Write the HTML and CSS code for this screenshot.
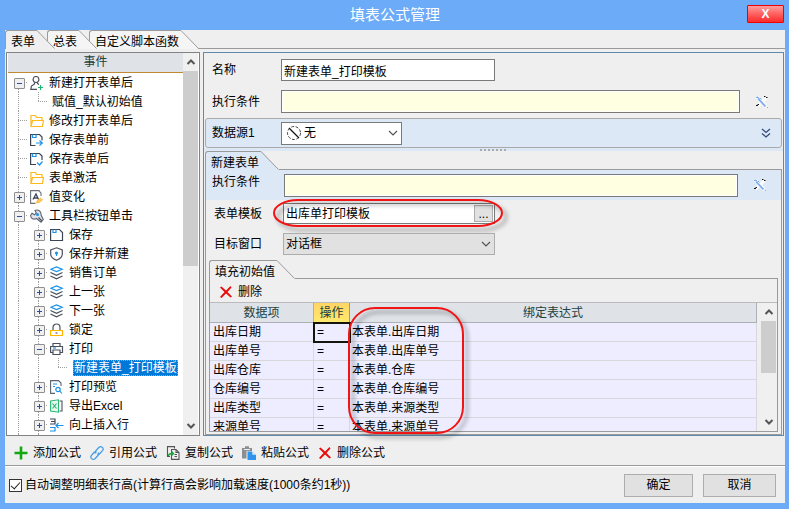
FILE: index.html
```html
<!DOCTYPE html>
<html lang="zh-CN">
<head>
<meta charset="utf-8">
<title>填表公式管理</title>
<link rel="stylesheet" href="styles.css">
</head>
<body>
<svg class="defs" aria-hidden="true">
  <symbol id="i-user" viewBox="0 0 14 14"><g fill="none" stroke="#4a505e" stroke-width="1.200"><ellipse cx="6" cy="3.500" rx="2.900" ry="3"/><path d="M4.500 6.300V8L1.500 10 .8 13.300H7"/><path d="M7.500 6.300V7.500l1.500 1"/></g><path d="M10.500 9v5M8 11.500h5" stroke="#1fb573" stroke-width="1.200"/></symbol>
  <symbol id="i-folder" viewBox="0 0 14 14"><path d="M1 12.500V1.500H5.500l1 2h5.500v3M1 12.500 2.500 6.500H13.400L12.500 12.500z" fill="none" stroke="#ffb91a" stroke-width="1.200"/></symbol>
  <symbol id="i-before" viewBox="0 0 14 14"><path d="M5.500 12.500H.6V1.500H9.500l2.500 2.500V7.500" fill="none" stroke="#3c4352" stroke-width="1.200"/><path d="M2.500 1.500v3h3.500v-3M6 10h6M9.500 7.500 12.300 10l-2.800 2.500" fill="none" stroke="#1a92ea" stroke-width="1.200"/></symbol>
  <symbol id="i-after" viewBox="0 0 14 14"><path d="M6 12.500H.6V1.500H9.500l2.500 2.500V8" fill="none" stroke="#3c4352" stroke-width="1.200"/><path d="M2.500 1.500v3h3.500v-3M7 10.500l2.500 2.500L12.500 9.500" fill="none" stroke="#1a92ea" stroke-width="1.200"/></symbol>
  <symbol id="i-value" viewBox="0 0 14 14"><path d="M5.500 13.400H.6V.6H9l2 2.500V6" fill="none" stroke="#6b707b" stroke-width="1.100"/><path d="M3 9.500 6 4l2.500 5.500M4 8h4" fill="none" stroke="#3c4352" stroke-width="1.300"/><path d="M6.500 13l.5-2 3.500-3 2 2L9 12.500z" fill="#ffc861" stroke="#f7ae1c" stroke-width=".7"/></symbol>
  <symbol id="i-tool" viewBox="0 0 14 14"><path d="M.6 6.500 2 4.300 4.500 5.800 6.300 4 5 1.500C8 0 11.500 2 11 6L13.300 10.500 11 13.200 6.500 9.500C3.500 11 .8 9.500.6 6.500z" fill="#dfe2e8" stroke="#5c6270" stroke-width="1.100"/><circle cx="7.500" cy="5.500" r="1.500" fill="#1a92ea"/><path d="m8.500 8.500 3.500 3.500" stroke="#4b5160" stroke-width="1.300"/></symbol>
  <symbol id="i-save" viewBox="0 0 14 14"><path d="M.6 1.500H9.500l3 3v8H.6z" fill="none" stroke="#3c4352" stroke-width="1.200"/><path d="M3 1.500v3h3v-3" fill="none" stroke="#1a92ea" stroke-width="1.200"/></symbol>
  <symbol id="i-shield" viewBox="0 0 14 14"><path d="M6.500 .8 12.300 3v4c0 3-2.500 5-5.800 6.300C3.500 12 .7 10 .7 7V3z" fill="none" stroke="#4a505e" stroke-width="1.200"/><circle cx="6.500" cy="6" r="1.600" fill="#1a92ea"/><path d="M6.500 6v3" stroke="#1a92ea"/></symbol>
  <symbol id="i-layers" viewBox="0 0 14 14"><path d="M.8 3.300 6.500 1l5.700 2.300L6.500 5.600z" fill="none" stroke="#1a92ea" stroke-width="1.200"/><path d="M.5 6.500 6.500 9.300l6-2.800M.5 10 6.500 12.800l6-2.800" fill="none" stroke="#4a505e" stroke-width="1.200"/></symbol>
  <symbol id="i-lock" viewBox="0 0 14 14"><path d="M3 7V4.500a3.500 3.500 0 0 1 7 0V7" fill="none" stroke="#4a505e" stroke-width="1.200"/><path d="M.6 7.500h11.900v5H.6z" fill="none" stroke="#ffb400" stroke-width="1.200"/><path d="M5.500 10h2" stroke="#3c4352"/></symbol>
  <symbol id="i-print" viewBox="0 0 14 14"><g fill="none" stroke="#4a505e" stroke-width="1.200"><path d="M3 4V1.500h7V4M3 10.500H.6V4.500h11.900v6H10"/><path d="M3 8h7v4.500H3z"/></g><path d="M3 6h3" stroke="#1a92ea" stroke-width="1.200"/></symbol>
  <symbol id="i-preview" viewBox="0 0 14 14"><path d="M5 13.400H.6V.6H8.500l2.500 2.500V6" fill="none" stroke="#5c6270" stroke-width="1.100"/><path d="M3 4h4M3 6.500h2" stroke="#1a92ea"/><circle cx="8" cy="9.500" r="2.200" fill="none" stroke="#1a92ea" stroke-width="1.200"/><path d="m9.800 11 2 2.500" stroke="#1a92ea" stroke-width="1.200"/></symbol>
  <symbol id="i-excel" viewBox="0 0 14 14"><path d="M.6 2 8.500.8v12.400L.6 12z" fill="#e9f8f0" stroke="#2bb673" stroke-width="1.100"/><path d="m2.500 4.500 4 5M6.500 4.500l-4 5" stroke="#2bb673" stroke-width="1.200"/><path d="M9.500 2h2.500v10H9.500" fill="none" stroke="#4a505e" stroke-width="1.100"/></symbol>
  <symbol id="i-insert" viewBox="0 0 14 14"><path d="M0 1h5v5H0M5 3.500H1" fill="none" stroke="#3c4352" stroke-width="1.200"/><path d="M0 9.500h5v3.500H0M13.500 7.500H6M8.500 5 6 7.500 8.500 10" fill="none" stroke="#1a92ea" stroke-width="1.200"/></symbol>
  <symbol id="i-x" viewBox="0 0 14 14"><path d="M1 2.500 2.500 1.500 7 5.500 11.500 1 12.500 2.500 8.500 7 13 11.500 11.500 12.500 7 8.500 2.500 13 1 12 5.500 7z" fill="#e80c0c"/></symbol>
  <symbol id="i-add" viewBox="0 0 14 14"><path d="M7 .5v13M.5 7h13" stroke="#12a812" stroke-width="2.600"/></symbol>
  <symbol id="i-link" viewBox="0 0 14 14"><g fill="none" stroke="#3d9be8" stroke-width="1.200"><path d="M5.500 7.500C4.500 6 5.500 5 6.500 4L9 1.300c2.300-1.800 5.500 1 3.500 3.400L10 7.500C9 8.500 8 8.300 7.300 7.700"/><path d="M8.500 6.500c1 1.500 0 2.500-1 3.500L5 12.700C2.700 14.500-.5 11.700 1.500 9.300L4 6.500c1-1 2-.8 2.700-.2"/></g></symbol>
  <symbol id="i-copy" viewBox="0 0 14 14"><path d="M4 10.500H1.500V.6H8.500v2" fill="none" stroke="#555" stroke-width="1.100"/><path d="M5.500 3.500h4.500l3 3v6.900H5.500zM10 3.500v3h3M8.500 8.500h2.500M8.500 10.500h2.500" fill="none" stroke="#555" stroke-width="1.100"/><path d="M2.500 10c0-2 1-2.500 4-2.500M5.500 5.500l2 2-2 2" fill="none" stroke="#19a33a" stroke-width="1.400"/></symbol>
  <symbol id="i-paste" viewBox="0 0 14 14"><path d="M0 2h3V.3h4V2h3v3H4.500v7.500H0z" fill="#8b8f94"/><path d="M2 3.500h6" stroke="#efefef"/><path d="M5.500 5.500H10l4 3.500v5H5.500z" fill="#3094ee"/><path d="M10.300 5.500v3.200H14" fill="#d5e9fd"/></symbol>
  <symbol id="i-wand" viewBox="0 0 16 16"><path d="m3 3 9.500 10M12.500 3.500 3.500 12" stroke="#fafafa" stroke-width="3.500"/><path d="M4 4.500 11.500 12.500" stroke="#7aaaf0" stroke-width="1.800"/><path d="M2 3.500h2M3.500 2.500l2 2M6 4l1.500 1.500M13 14l1-1" stroke="#7fb0f0"/><path d="M10 2.500h1.500M12 3.500h1.500M2 11.500h2M3.500 10.500h1.500" stroke="#111" stroke-width="1"/></symbol>
  <symbol id="i-up" viewBox="0 0 10 10"><path d="M1.500 7 5 3.500 8.500 7" fill="none" stroke="#555" stroke-width="2"/></symbol>
  <symbol id="i-down" viewBox="0 0 10 10"><path d="M1.500 3 5 6.500 8.500 3" fill="none" stroke="#555" stroke-width="2"/></symbol>
  <symbol id="i-chev" viewBox="0 0 10 10"><path d="M1 3 5 7l4-4" fill="none" stroke="#555" stroke-width="1.200"/></symbol>
  <symbol id="corner" viewBox="0 0 18 19"><path d="M0 0h1L17.500 19H0z" class="fill"/><path d="M0 .5 17.500 18.500" fill="none" stroke="#9a9a9a"/></symbol>
</svg>
<div class="window">
  <header class="titlebar">
    <h1>填表公式管理</h1>
    <button class="close" type="button" aria-label="关闭">X</button>
  </header>
  <div class="client">
    <nav class="tabs main-tabs">
      <button type="button" class="tab active"><span>表单</span><svg><use href="#corner"/></svg></button>
      <button type="button" class="tab"><span>总表</span><svg><use href="#corner"/></svg></button>
      <button type="button" class="tab"><span>自定义脚本函数</span><svg><use href="#corner"/></svg></button>
      <i class="rest"></i>
    </nav>
    <main class="panes">
      <section class="tree-pane">
        <div class="tree-main">
          <h2>事件</h2>
          <ul class="tree">
            <li><i class="g node minus first"></i><svg><use href="#i-user"/></svg><span>新建打开表单后</span></li>
            <li><i class="g"></i><i class="g end"></i><span class="leaf">赋值_默认初始值</span></li>
            <li><i class="g tee"></i><svg><use href="#i-folder"/></svg><span>修改打开表单后</span></li>
            <li><i class="g tee"></i><svg><use href="#i-before"/></svg><span>保存表单前</span></li>
            <li><i class="g tee"></i><svg><use href="#i-after"/></svg><span>保存表单后</span></li>
            <li><i class="g tee"></i><svg><use href="#i-folder"/></svg><span>表单激活</span></li>
            <li><i class="g node plus"></i><svg><use href="#i-value"/></svg><span>值变化</span></li>
            <li><i class="g node minus"></i><svg><use href="#i-tool"/></svg><span>工具栏按钮单击</span></li>
            <li><i class="g"></i><i class="g node plus"></i><svg><use href="#i-save"/></svg><span>保存</span></li>
            <li><i class="g"></i><i class="g node plus"></i><svg><use href="#i-shield"/></svg><span>保存并新建</span></li>
            <li><i class="g"></i><i class="g node plus"></i><svg><use href="#i-layers"/></svg><span>销售订单</span></li>
            <li><i class="g"></i><i class="g node plus"></i><svg><use href="#i-layers"/></svg><span>上一张</span></li>
            <li><i class="g"></i><i class="g node plus"></i><svg><use href="#i-layers"/></svg><span>下一张</span></li>
            <li><i class="g"></i><i class="g node plus"></i><svg><use href="#i-lock"/></svg><span>锁定</span></li>
            <li><i class="g"></i><i class="g node minus"></i><svg><use href="#i-print"/></svg><span>打印</span></li>
            <li><i class="g"></i><i class="g"></i><i class="g end"></i><span class="leaf selected">新建表单_打印模板</span></li>
            <li><i class="g"></i><i class="g node plus"></i><svg><use href="#i-preview"/></svg><span>打印预览</span></li>
            <li><i class="g"></i><i class="g node plus"></i><svg><use href="#i-excel"/></svg><span>导出Excel</span></li>
            <li><i class="g"></i><i class="g node plus"></i><svg><use href="#i-insert"/></svg><span>向上插入行</span></li>
            <li><i class="g"></i><i class="g"></i></li>
          </ul>
        </div>
        <div class="scrollbar tree-scroll"><svg><use href="#i-up"/></svg><i class="thumb"></i><svg><use href="#i-down"/></svg></div>
      </section>
      <section class="detail">
        <div class="top-form">
          <div class="row"><label for="name">名称</label><input id="name" class="field" value="新建表单_打印模板"></div>
          <div class="row"><label for="cond1">执行条件</label><input id="cond1" class="expr"><button type="button" class="wand" aria-label="编辑执行条件"><svg><use href="#i-wand"/></svg></button></div>
        </div>
        <div class="source">
          <label for="src">数据源1</label>
          <div class="combo src-combo">
            <svg class="none" viewBox="0 0 16 16"><circle cx="8" cy="8" r="6.500" fill="none" stroke="#444" stroke-dasharray="3 1.500"/><path d="m3 3 10 10" stroke="#111" stroke-width="1.200"/></svg>
            <select id="src"><option>无</option></select>
            <svg class="chev"><use href="#i-chev"/></svg>
          </div>
          <button type="button" class="expand" aria-label="展开"><svg viewBox="0 0 10 12"><path d="m1 2 4 3.500L9 2M1 6.500 5 10l4-3.500" fill="none" stroke="#2d4a7a" stroke-width="1.300"/></svg></button>
        </div>
        <div class="splitter"><i></i></div>
        <div class="subpage">
          <div class="tabs blue-tabs"><button type="button" class="tab"><span>新建表单</span><svg><use href="#corner"/></svg></button><i class="rest"></i></div>
          <div class="page">
            <div class="row blue-row"><label for="cond2">执行条件</label><input id="cond2" class="expr"><button type="button" class="wand" aria-label="编辑执行条件"><svg><use href="#i-wand"/></svg></button></div>
            <div class="row template"><label for="tpl">表单模板</label><div class="browse"><input id="tpl" value="出库单打印模板"><button type="button" aria-label="选择模板">...</button><svg class="mark pill" viewBox="0 0 232 30"><rect x="2" y="2" width="228" height="26" rx="24" ry="13"/></svg></div></div>
            <div class="row target"><label for="win">目标窗口</label><div class="combo win-combo"><select id="win"><option>对话框</option></select><svg class="chev"><use href="#i-chev"/></svg></div></div>
            <div class="fill">
              <div class="tabs gray-tabs"><button type="button" class="tab"><span>填充初始值</span><svg><use href="#corner"/></svg></button><i class="rest"></i></div>
              <div class="fill-page">
                <div class="bar"><button type="button"><svg><use href="#i-x"/></svg>删除</button></div>
                <div class="grid-wrap">
                  <div class="grid-clip">
                    <table>
                      <colgroup><col class="c1"><col class="c2"><col></colgroup>
                      <thead><tr><th>数据项</th><th class="hot">操作</th><th>绑定表达式</th></tr></thead>
                      <tbody>
                        <tr><td>出库日期</td><td class="cursor">=</td><td>本表单.出库日期</td></tr>
                        <tr><td>出库单号</td><td>=</td><td>本表单.出库单号</td></tr>
                        <tr><td>出库仓库</td><td>=</td><td>本表单.仓库</td></tr>
                        <tr><td>仓库编号</td><td>=</td><td>本表单.仓库编号</td></tr>
                        <tr><td>出库类型</td><td>=</td><td>本表单.来源类型</td></tr>
                        <tr><td>来源单号</td><td>=</td><td>本表单.来源单号</td></tr>
                      </tbody>
                    </table>
                  </div>
                  <div class="scrollbar grid-scroll"><svg><use href="#i-up"/></svg><i class="thumb"></i><svg><use href="#i-down"/></svg></div>
                  <svg class="mark block" viewBox="0 0 118 129"><rect x="2" y="2" width="114" height="125" rx="26"/></svg>
                </div>
              </div>
            </div>
          </div>
        </div>
      </section>
    </main>
    <div class="actions">
      <button type="button"><svg><use href="#i-add"/></svg>添加公式</button>
      <button type="button"><svg><use href="#i-link"/></svg>引用公式</button>
      <button type="button"><svg><use href="#i-copy"/></svg>复制公式</button>
      <button type="button"><svg><use href="#i-paste"/></svg>粘贴公式</button>
      <button type="button"><svg><use href="#i-x"/></svg>删除公式</button>
    </div>
    <footer>
      <label class="check"><input type="checkbox" checked>自动调整明细表行高(计算行高会影响加载速度(1000条约1秒))</label>
      <button type="button" class="ok">确定</button>
      <button type="button" class="cancel">取消</button>
    </footer>
  </div>
</div>
</body>
</html>
```
FILE: styles.css
```css
* { box-sizing: border-box; }
body, h1, h2, ul { margin: 0; padding: 0; }
body, button, input, select {
  font: 12px/16px "Liberation Sans", "Noto Sans CJK SC", sans-serif;
  color: #000;
}
button { background: none; border: 0; padding: 0; }
svg { display: block; flex: none; }
.defs { display: none; }

.window {
  height: 100vh;
  display: flex;
  flex-direction: column;
  padding: 0 4px 6px 5px;
  background: #6cabf7;
}
.titlebar {
  position: relative;
  height: 30px;
  flex: none;
  display: flex;
  align-items: center;
  justify-content: center;
}
.titlebar h1 { font-size: 15px; font-weight: 400; color: #fff; }
.close {
  position: absolute;
  top: 5px;
  right: 1px;
  width: 37px;
  height: 18px;
  border: 1px solid #f00000;
  border-radius: 1px;
  background: linear-gradient(#ff9c9c, #ff6060 50%, #ff2a2a);
  color: #fff;
  font-weight: 700;
  text-align: center;
}
.client {
  flex: 1;
  min-height: 0;
  display: flex;
  flex-direction: column;
  background: #efefef;
}

/* slanted tabs */
.tabs { display: flex; height: 19px; flex: none; }
.tab { display: flex; position: relative; margin-right: -8px; }
.tab span {
  height: 19px;
  padding: 3px 0 0 5px;
  border: solid #9a9a9a;
  border-width: 1px 0 0 1px;
  border-radius: 3px 0 0 0;
  background: var(--tab);
  white-space: nowrap;
}
.tab svg { width: 18px; height: 19px; }
.fill { fill: var(--tab); }
.rest { flex: 1; border-bottom: 1px solid #9a9a9a; }
.main-tabs { --tab: #efefef; height: 20px; padding-bottom: 1px; }
.main-tabs .tab span { padding-right: 2px; }
.main-tabs .tab:not(.active) { --tab: #f5f5f5; }
.main-tabs .tab:nth-child(1) { z-index: 3; }
.main-tabs .tab:nth-child(2) { z-index: 2; }
.main-tabs .tab:nth-child(3) { z-index: 1; }
.blue-tabs { --tab: #dde8f7; background: #efefef; }
.gray-tabs { --tab: #efefef; }
.blue-tabs .tab, .gray-tabs .tab { margin-right: 0; }
.blue-tabs span { padding-right: 2px; }
.gray-tabs span { padding-right: 2px; }

.panes { flex: 1; min-height: 0; display: flex; gap: 3px; padding: 2px 1px 0; }

/* event tree */
.tree-pane {
  display: flex;
  width: 194px;
  flex: none;
  border: 1px solid #828282;
  background: #fff;
  padding: 0 1px;
}
.tree-main { flex: 1; min-width: 0; display: flex; flex-direction: column; overflow: hidden; }
.tree-main h2 {
  flex: none;
  height: 20px;
  border-bottom: 1px solid #c08a30;
  background: #dfe3e8;
  color: #23403c;
  font-size: 12px;
  font-weight: 400;
  line-height: 19px;
  text-align: center;
}
.tree { list-style: none; flex: 1; min-height: 0; overflow: hidden; }
.tree li { display: flex; align-items: center; height: 19px; white-space: nowrap; }
.tree svg { width: 14px; height: 14px; margin: 0 5px 0 2px; }
.g {
  position: relative;
  width: 20px;
  height: 19px;
  flex: none;
  background: repeating-linear-gradient(#a0a0a0 0 1px, transparent 1px 2px) 10px 0 / 1px 100% no-repeat;
}
.g.first { background-position: 10px 10px; }
.g.end { background-size: 1px 10px; }
.g.tee::before, .g.node::before, .g.end::before {
  content: "";
  position: absolute;
  left: 10px;
  right: 0;
  top: 9px;
  height: 1px;
  background: repeating-linear-gradient(90deg, #a0a0a0 0 1px, transparent 1px 2px);
}
.g.node::after {
  content: "";
  position: absolute;
  left: 6px;
  top: 5px;
  width: 9px;
  height: 9px;
  border: 1px solid #8f8f8f;
  border-radius: 1px;
}
.g.minus::after { background: linear-gradient(#2d4f9e, #2d4f9e) center / 5px 1px no-repeat, #f0f0f0; }
.g.plus::after {
  background: linear-gradient(#2d4f9e, #2d4f9e) center / 5px 1px no-repeat,
    linear-gradient(#2d4f9e, #2d4f9e) center / 1px 5px no-repeat, #f0f0f0;
}
.tree .leaf { margin-left: 4px; }
.tree .selected {
  margin-left: 5px;
  padding: 0 1px;
  background: #0078d7;
  color: #fff;
  outline: 1px dotted #ff9030;
  outline-offset: -1px;
}

.scrollbar {
  display: flex;
  flex-direction: column;
  align-items: center;
  width: 15px;
  flex: none;
  background: #f0f0f0;
}
.scrollbar svg { width: 10px; height: 10px; margin: 4px 0; }
.thumb { width: 100%; background: #cdcdcd; margin-bottom: auto; }
.tree-scroll .thumb { height: 51%; }

/* detail pane */
.detail {
  flex: 1;
  min-width: 0;
  display: flex;
  flex-direction: column;
  border: 1px solid #5f8ab0;
}
.row { display: flex; align-items: center; }
.row label { flex: none; width: 69px; }
input { min-width: 0; margin: 0; }
.top-form { display: flex; flex-direction: column; gap: 9px; padding: 6px 0 5px 8px; }
.field, .expr { border: 1px solid #7a7a7a; padding: 0 2px; }
.field { width: 214px; height: 22px; }
.expr { flex: 1; height: 23px; background: #ffffe1; box-shadow: inset 0 0 0 1px #fff; }
.wand { width: 43px; display: flex; justify-content: center; }
.wand svg { width: 16px; height: 16px; }
.source {
  display: flex;
  align-items: center;
  flex: none;
  height: 30px;
  margin: 0 1px;
  padding-left: 6px;
  border: 1px solid #aaa;
  border-radius: 3px;
  background: #dde8f7;
}
.source label { width: 69px; }
.combo { display: flex; position: relative; align-items: center; border: 1px solid #7a7a7a; }
.combo select {
  appearance: none;
  flex: 1;
  height: 20px;
  padding: 0 2px;
  border: 0;
  background: none;
}
.combo .chev { position: absolute; right: 3px; width: 10px; height: 10px; }
.src-combo { width: 121px; height: 23px; background: #fff; }
.src-combo .none { width: 16px; height: 16px; margin-left: 4px; }
.expand { margin-left: auto; padding-right: 10px; }
.expand svg { width: 10px; height: 12px; }
.splitter { flex: none; height: 3px; background: #dde8f7; display: flex; justify-content: center; padding-top: 1px; }
.splitter i { width: 28px; height: 2px; background: repeating-linear-gradient(90deg, #aaa 0 2px, transparent 2px 4px); }

.subpage { flex: 1; min-height: 0; display: flex; flex-direction: column; margin: 0 1px; }
.page {
  flex: 1;
  min-height: 0;
  display: flex;
  flex-direction: column;
  border: 1px solid #9a9a9a;
  border-top: 0;
}
.blue-row { align-items: flex-start; height: 30px; padding: 4px 0 0 6px; background: #dde8f7; }
.blue-row label { width: 72px; }
.blue-row .wand { padding-top: 3px; }
.template { padding: 3px 0 0 8px; }
.target { padding: 9px 0 5px 8px; }
.browse {
  position: relative;
  display: flex;
  width: 212px;
  height: 21px;
  padding: 1px;
  border: 1px solid #7a7a7a;
  background: #fff;
}
.browse input { flex: 1; border: 0; padding: 0 1px; background: none; }
.browse button { width: 19px; border: 1px solid #adadad; background: #e1e1e1; line-height: 14px; }
.win-combo { width: 212px; height: 22px; background: #e1e1e1; border-color: #adadad; }

/* annotation outlines lie above the form */
.mark { position: absolute; overflow: visible; pointer-events: none; filter: drop-shadow(4px 4px 2px rgba(0, 0, 0, .4)); }
.mark rect { fill: none; stroke: #f01414; stroke-width: 2; }
.pill { left: -12px; top: -6px; width: 232px; height: 30px; }
.block { left: 137px; top: 3px; width: 118px; height: 129px; }

div.fill { flex: 1; min-height: 0; display: flex; flex-direction: column; margin: 0 3px 2px; }
.fill-page {
  flex: 1;
  min-height: 0;
  display: flex;
  flex-direction: column;
  border: 1px solid #9a9a9a;
  border-top: 0;
}
.bar { flex: none; height: 23px; padding: 5px 0 0 9px; }
.bar button { display: flex; align-items: center; gap: 5px; }
.bar svg, .actions svg { width: 14px; height: 14px; }
.grid-wrap { position: relative; flex: 1; min-height: 0; display: flex; border-top: 1px solid #bbb; }
.grid-clip { flex: 1; min-width: 0; overflow: hidden; }
table { width: 100%; table-layout: fixed; border-collapse: separate; border-spacing: 0; }
.c1 { width: 104px; }
.c2 { width: 36px; }
th, td { padding: 0 3px; border: solid #d8d8dc; border-width: 0 1px 1px 0; text-align: left; }
th {
  height: 20px;
  background: #dfe3e8;
  border-color: #adb1b5;
  color: #23403c;
  font-weight: 400;
  text-align: center;
}
th.hot { background: linear-gradient(#ffd566, #ffe96e); border-color: #c9952e; }
td { height: 19px; background: #eeedff; line-height: 18px; }
td:last-child { padding-left: 2px; }
td.cursor { outline: 2px solid #14140c; outline-offset: -1px; }
.grid-scroll { margin: 0 1px 0 4px; }
.grid-scroll .thumb { height: 52px; }

.actions { flex: none; display: flex; align-items: center; gap: 9px; height: 30px; padding: 4px 0 0 9px; border-bottom: 1px solid #9a9a9a; }
.actions button { display: flex; align-items: center; gap: 5px; white-space: nowrap; }
footer {
  flex: none;
  display: flex;
  align-items: center;
  gap: 10px;
  height: 37px;
  padding: 0 9px 0 4px;
  border-top: 1px solid #fff;
}
.check { display: flex; align-items: center; gap: 3px; margin-right: auto; white-space: nowrap; }
.check input {
  appearance: none;
  width: 13px;
  height: 13px;
  border: 1px solid #333;
  background: #fff;
  display: flex;
  justify-content: center;
}
.check input:checked::before {
  content: "";
  width: 4px;
  height: 8px;
  border: solid #222;
  border-width: 0 1px 1px 0;
  transform: rotate(42deg);
}
.ok, .cancel { height: 23px; background: #e1e1e1; border: 1px solid #adadad; }
.ok { width: 69px; }
.cancel { width: 73px; }
```
